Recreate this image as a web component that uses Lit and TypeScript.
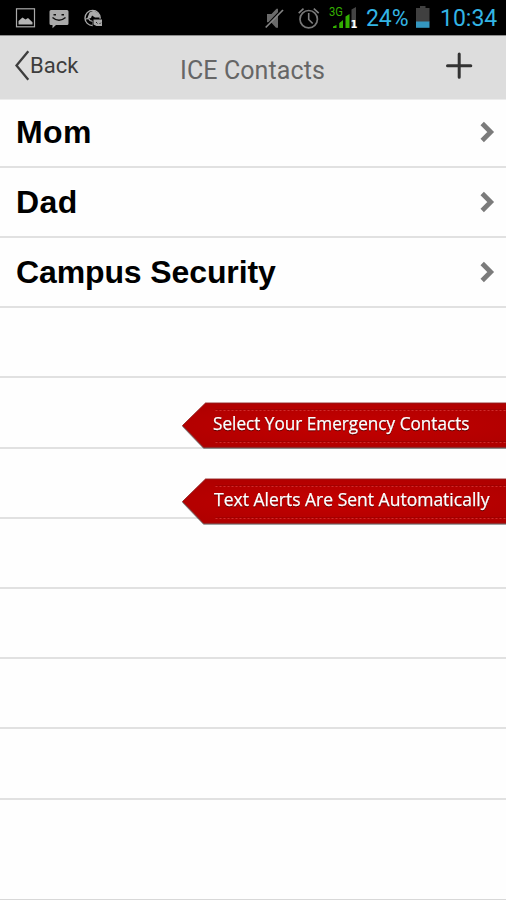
import { LitElement, html, css, svg } from "lit";
import { customElement, property } from "lit/decorators.js";

@customElement("status-bar")
class StatusBar extends LitElement {
  static styles = css`
    :host { display: block; height: 35px; background: #000; border-bottom: 1px solid #8d8d8d; box-sizing: content-box; }
    .bar { display: flex; justify-content: space-between; height: 35px; }
    .right { display: flex; }
    .time { font: 23px/35px Roboto, sans-serif; color: #33b5e5; white-space: nowrap; padding-top: 1px; height: 34px; }
    .pct { width: 49px; letter-spacing: -0.1px; }
    .clock { width: 66px; letter-spacing: 0; margin-left: 9px; }
    .net { font: 12.5px Roboto, sans-serif; }
    .sim { font: bold 10px "DejaVu Sans", sans-serif; }
    svg { display: block; flex: none; }
  `;
  render() {
    return html`<div class="bar">
      <svg width="120" height="35" viewBox="0 0 120 35">
        <rect x="16.500" y="8.800" width="18" height="18" fill="none" stroke="#aaa" stroke-width="1.200"></rect>
        <path d="M18.500 24.500V21l4-3.500 3 2 2.500-1.500 4.500 4.300v2.200z" fill="#b5b5b5"></path>
        <path d="M51 10h16q1.500 0 1.500 1.500v12q0 1.500-1.500 1.500H56l-3.500 3.200V25H51q-1.500 0-1.500-1.500v-12Q49.500 10 51 10z" fill="#aaa"></path>
        <path d="M53.500 14.700h2.500M61.500 14.700h2.500M52.500 17.500q6.500 5.500 13 0" fill="none" stroke="#111" stroke-width="1.500"></path>
        <circle cx="92.600" cy="18" r="7.600" fill="none" stroke="#aaa" stroke-width="1.400"></circle>
        <path d="M89.500 12.500l4.500-2 4.500 3 1.500 4h-5l-3-2-1 2.500-4 1z" fill="#aaa"></path>
        <path d="M86 19q3-1 4 1.500l3 1v3.500" fill="none" stroke="#aaa" stroke-width="1.200"></path>
        <rect x="92.600" y="18.700" width="10" height="8" fill="#000"></rect>
        <path d="M93.500 19.500h8.500V26h-5.500l-3-1.500z" fill="#aaa"></path>
        <path d="M96 22l1.500 1.500M99.500 24l1.300-1.300" stroke="#222"></path>
      </svg>
      <div class="right">
        <svg width="111" height="35" viewBox="255 0 111 35">
          <path d="M267 14h4.500l5-5.200h1.500v19h-2l-5-5.500H267z" fill="#6a6a6a"></path>
          <path d="M265.500 26.300L282 9" stroke="#000" stroke-width="1.300"></path>
          <path d="M265.700 27.500L283 10" stroke="#858585" stroke-width="1.700"></path>
          <circle cx="308.700" cy="19.200" r="8.700" fill="none" stroke="#777" stroke-width="1.700"></circle>
          <path d="M308.700 13v6.500l4 4M298.700 13.200l4.800-4.500M313.800 8.700l4.900 4.500" fill="none" stroke="#808080" stroke-width="1.600"></path>
          <text class="net" x="329" y="16" fill="#35b000" textLength="14" lengthAdjust="spacingAndGlyphs">3G</text>
          <path d="M333 28v-1.500l3.500-1.500V28zM339.500 28v-5l3.500-2v7zM345.500 28V16.500l4-2.500v14z" fill="#32b000"></path>
          <path d="M339.500 23l3.500-3v8h-3.500z" fill="#32b000"></path>
          <path d="M351.500 28V9.500l4.500-2.500v21z" fill="#444"></path>
          <text class="sim" x="350.500" y="28" fill="#fff">1</text>
        </svg>
        <div class="time pct">24%</div>
        <svg width="16" height="35" viewBox="415 0 16 35">
          <path d="M416 8h4V6h5.500v2h4v14H416z" fill="#404040"></path>
          <path d="M416 21.500h13.500v6.300H416z" fill="#3497c0"></path>
        </svg>
        <div class="time clock">10:34</div>
      </div>
    </div>`;
  }
}

@customElement("nav-header")
class NavHeader extends LitElement {
  static styles = css`
    :host { display: block; }
    .head { display: flex; align-items: flex-start; height: 63px; background: #ddd; border-bottom: 1px solid #ececec; font-family: Roboto, sans-serif; }
    .back { display: flex; width: 180px; color: #3d3d3d; font-size: 22px; line-height: 32px; padding-top: 14px; }
    .back svg { margin-left: 14px; width: 16px; }
    .title { width: 265px; font-size: 25px; line-height: 30px; padding-top: 20px; color: #666; letter-spacing: 0.1px; white-space: nowrap; }
    .add { margin-top: 16px; }
    svg { display: block; flex: none; }
  `;
  render() {
    return html`<div class="head">
      <div class="back">
        <svg width="16" height="34" viewBox="14 50 16 34"><path d="M28.300 51.300L16.500 65.500l11.800 14.200" fill="none" stroke="#3d3d3d" stroke-width="2.300"></path></svg>
        <span>Back</span>
      </div>
      <div class="title">ICE Contacts</div>
      <svg class="add" width="28" height="28" viewBox="445 52 28 28"><path d="M447.500 65.700h23.300M459.200 54v23.300" stroke="#333" stroke-width="3" stroke-linecap="round"></path></svg>
    </div>`;
  }
}

@customElement("contact-row")
class ContactRow extends LitElement {
  @property() name = "";
  static styles = css`
    :host { display: block; height: 70.22px; box-sizing: border-box; border-bottom: 2px solid #e1e1e1; }
    .row { display: flex; justify-content: space-between; align-items: center; height: 100%; padding: 0 11px 0 16px; box-sizing: border-box; }
    .name { font: bold 32px/40px "Liberation Sans", Arial, sans-serif; color: #000; white-space: nowrap; }
    .short { letter-spacing: 0.4px; }
    .long { letter-spacing: -0.12px; }
    svg { display: block; }
  `;
  render() {
    return this.name
      ? html`<div class="row">
          <span class="name ${this.name.length > 5 ? "long" : "short"}">${this.name}</span>
          <svg width="15" height="22" viewBox="0 0 15 22"><path d="M2.200 2.500l8.500 8.500-8.500 8.500" fill="none" stroke="#7b7b7b" stroke-width="4.800"></path></svg>
        </div>`
      : null;
  }
}

@customElement("ribbon-flag")
class RibbonFlag extends LitElement {
  @property() label = "";
  @property({ type: Number }) start = 33;
  @property({ type: Number }) span = 256;
  static styles = css`
    :host { display: block; height: 48px; }
    svg { display: block; }
    .label { font: 18px "Open Sans", "Noto Sans", sans-serif; stroke: #fff; stroke-width: 0.25px; }
    .glow { filter: drop-shadow(0 1px 0.5px #0007); }
  `;
  render() {
    return html`<svg width="326" height="48" viewBox="0 0 326 48">
      <defs>
        <radialGradient id="red" cx="50%" cy="50%" r="60%"><stop offset="0" stop-color="#c40000"></stop><stop offset="1" stop-color="#b00000"></stop></radialGradient>
      </defs>
      <path class="glow" d="M2.500 24.500L25.500 2H330v44.300H23.500z" fill="url(#red)" stroke="#8e2020" stroke-width="0.900"></path>
      ${[9.5, 41.5].map((y) => svg`<path d=${`M35.500 ${y}H326`} stroke="#cf2c2c" stroke-width="1" stroke-dasharray="2 2"></path><path d=${`M35.500 ${y - 1}H326`} stroke="#990000" stroke-width="0.700"></path>`)}
      <text class="label glow" x=${this.start} y="28.500" fill="#fff" textLength=${this.span} lengthAdjust="spacingAndGlyphs">${this.label}</text>
    </svg>`;
  }
}

@customElement("app-root")
class AppRoot extends LitElement {
  static styles = css`
    :host { display: block; position: relative; width: 506px; height: 900px; overflow: hidden; background: #fefefe; }
    .list { display: flex; flex-direction: column; margin-top: -2.5px; height: 802.5px; }
    contact-row { flex: none; }
    .rest { flex: 1; border-bottom: 1px solid #d8d8d8; }
    .flags { position: absolute; right: 0; top: 401px; display: grid; gap: 28px; }
  `;
  render() {
    const names = ["Mom", "Dad", "Campus Security", "", "", "", "", "", "", ""];
    return html`
      <status-bar></status-bar>
      <nav-header></nav-header>
      <div class="list">
        ${names.map((n) => html`<contact-row .name=${n}></contact-row>`)}
        <div class="rest"></div>
      </div>
      <div class="flags">
        <ribbon-flag label="Select Your Emergency Contacts" .start=${33} .span=${256.5}></ribbon-flag>
        <ribbon-flag label="Text Alerts Are Sent Automatically" .start=${34} .span=${275.5}></ribbon-flag>
      </div>
    `;
  }
}
